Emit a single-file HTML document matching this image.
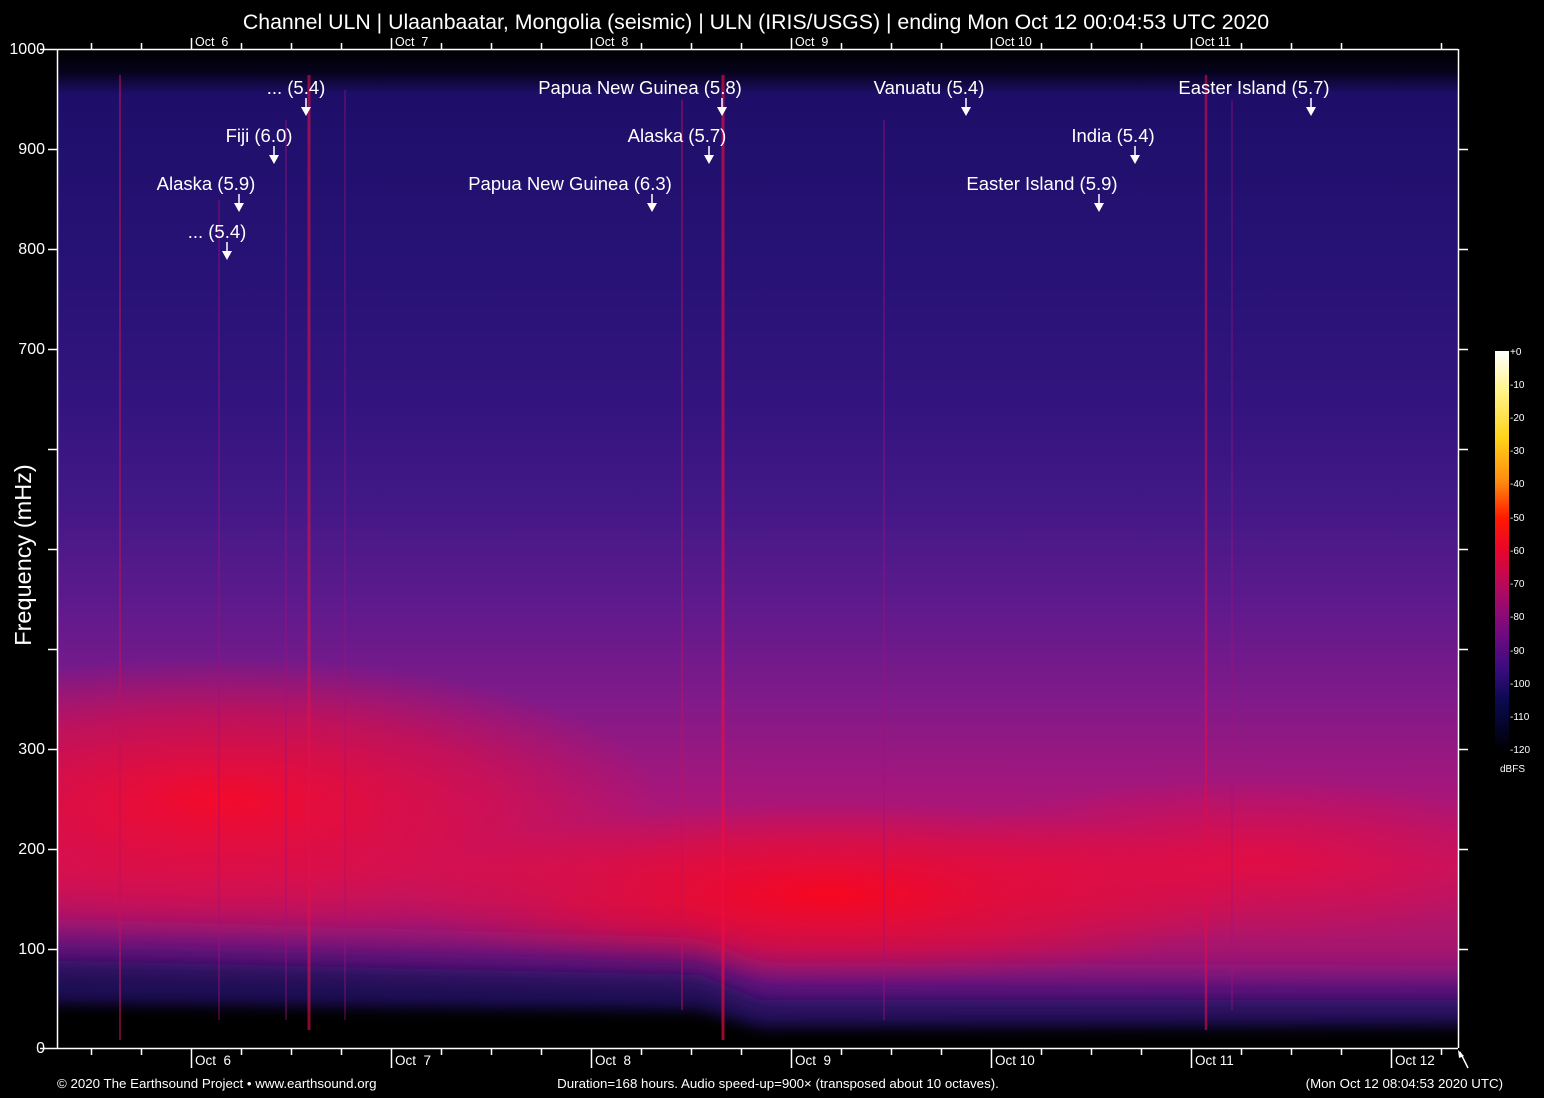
<!DOCTYPE html>
<html><head><meta charset="utf-8"><style>
html,body{margin:0;padding:0;background:#000;}
svg{display:block;}
text{font-family:"Liberation Sans",Arial,sans-serif;fill:#fff;}
</style></head><body>
<svg width="1544" height="1098" viewBox="0 0 1544 1098" xmlns="http://www.w3.org/2000/svg">
<defs>
<linearGradient id="base" x1="0" y1="49" x2="0" y2="1048" gradientUnits="userSpaceOnUse">
<stop offset="0" stop-color="#000"/>
<stop offset="0.022" stop-color="#05021a"/>
<stop offset="0.045" stop-color="#1e0e68"/>
<stop offset="0.2" stop-color="#261274"/>
<stop offset="0.35" stop-color="#32147e"/>
<stop offset="0.45" stop-color="#421886"/>
<stop offset="0.55" stop-color="#5c1a8c"/>
<stop offset="0.65" stop-color="#801a8a"/>
<stop offset="0.75" stop-color="#a8167a"/>
<stop offset="0.82" stop-color="#c01466"/>
<stop offset="0.9" stop-color="#a8166e"/>
<stop offset="1" stop-color="#7a1a8c"/>
</linearGradient>
<radialGradient id="r1" cx="220" cy="800" r="340" gradientUnits="userSpaceOnUse" gradientTransform="translate(220 800) scale(1.3 0.42) translate(-220 -800)">
<stop offset="0" stop-color="#f80a26" stop-opacity="0.95"/>
<stop offset="0.6" stop-color="#e80c3a" stop-opacity="0.55"/>
<stop offset="1" stop-color="#e80c3a" stop-opacity="0"/>
</radialGradient>
<radialGradient id="r2" cx="830" cy="895" r="330" gradientUnits="userSpaceOnUse" gradientTransform="translate(830 895) scale(1.3 0.28) translate(-830 -895)">
<stop offset="0" stop-color="#fa061c" stop-opacity="0.95"/>
<stop offset="0.6" stop-color="#ec0a30" stop-opacity="0.55"/>
<stop offset="1" stop-color="#ec0a30" stop-opacity="0"/>
</radialGradient>
<radialGradient id="r3" cx="1250" cy="860" r="260" gradientUnits="userSpaceOnUse" gradientTransform="translate(1250 860) scale(1.2 0.32) translate(-1250 -860)">
<stop offset="0" stop-color="#ec0a38" stop-opacity="0.75"/>
<stop offset="1" stop-color="#ec0a38" stop-opacity="0"/>
</radialGradient>
<linearGradient id="cbar" x1="0" y1="351" x2="0" y2="748" gradientUnits="userSpaceOnUse">
<stop offset="0" stop-color="#ffffff"/>
<stop offset="0.1" stop-color="#fff58a"/>
<stop offset="0.22" stop-color="#ffd21a"/>
<stop offset="0.33" stop-color="#ff8a10"/>
<stop offset="0.42" stop-color="#ff1a00"/>
<stop offset="0.5" stop-color="#e8062a"/>
<stop offset="0.6" stop-color="#b00a60"/>
<stop offset="0.7" stop-color="#780a80"/>
<stop offset="0.8" stop-color="#3a0c80"/>
<stop offset="0.88" stop-color="#0a0a50"/>
<stop offset="1" stop-color="#000008"/>
</linearGradient>
<filter id="b1" x="-10%" y="-50%" width="120%" height="200%"><feGaussianBlur stdDeviation="18"/></filter>
<filter id="b2" x="-10%" y="-50%" width="120%" height="200%"><feGaussianBlur stdDeviation="14"/></filter>
<filter id="b3" x="-10%" y="-50%" width="120%" height="200%"><feGaussianBlur stdDeviation="7"/></filter>
<clipPath id="plot"><rect x="58" y="49" width="1400" height="999"/></clipPath>
</defs>

<g clip-path="url(#plot)">
<rect x="58" y="49" width="1400" height="999" fill="url(#base)"/>
<rect x="58" y="49" width="1400" height="999" fill="url(#r1)"/>
<rect x="58" y="49" width="1400" height="999" fill="url(#r2)"/>
<rect x="58" y="49" width="1400" height="999" fill="url(#r3)"/>
<!-- purple transition -->
<path d="M20 930 L700 950 L760 975 L1500 978 L1500 1100 L20 1100 Z" fill="#4a1888" opacity="0.7" filter="url(#b1)"/>
<!-- navy band -->
<path d="M20 960 L700 975 L760 1000 L1500 1000 L1500 1100 L20 1100 Z" fill="#160a50" opacity="0.9" filter="url(#b2)"/>
<!-- black -->
<path d="M20 1003 L700 1010 L760 1028 L1500 1026 L1500 1100 L20 1100 Z" fill="#000" filter="url(#b3)"/>
<!-- event lines -->
<g stroke-width="2">
<line x1="120" y1="75" x2="120" y2="1040" stroke="#c0105a" stroke-opacity="0.55"/>
<line x1="219" y1="200" x2="219" y2="1020" stroke="#a0107a" stroke-opacity="0.4"/>
<line x1="286" y1="120" x2="286" y2="1020" stroke="#a0107a" stroke-opacity="0.4"/>
<line x1="309" y1="75" x2="309" y2="1030" stroke="#e0104a" stroke-width="3" stroke-opacity="0.6"/>
<line x1="345" y1="90" x2="345" y2="1020" stroke="#a0107a" stroke-opacity="0.35"/>
<line x1="682" y1="100" x2="682" y2="1010" stroke="#c0105a" stroke-opacity="0.45"/>
<line x1="723" y1="75" x2="723" y2="1040" stroke="#f00a40" stroke-width="3" stroke-opacity="0.65"/>
<line x1="884" y1="120" x2="884" y2="1020" stroke="#a0107a" stroke-opacity="0.4"/>
<line x1="1206" y1="75" x2="1206" y2="1030" stroke="#e00c4a" stroke-width="2.5" stroke-opacity="0.6"/>
<line x1="1232" y1="100" x2="1232" y2="1010" stroke="#a0107a" stroke-opacity="0.35"/>
</g>
</g>

<g stroke="#fff" stroke-width="1.5" fill="none">
<line x1="57.5" y1="49" x2="57.5" y2="1048"/>
<line x1="1458.5" y1="49" x2="1458.5" y2="1048"/>
<line x1="40" y1="1048.5" x2="1458" y2="1048.5"/>
<line x1="40" y1="49.5" x2="1458" y2="49.5"/>
<path d="M48 149.5H57M48 249.5H57M48 349.5H57M48 449.5H57M48 549.5H57M48 649.5H57M48 749.5H57M48 849.5H57M48 949.5H57"/>
<path d="M1458 149.5H1468M1458 249.5H1468M1458 349.5H1468M1458 449.5H1468M1458 549.5H1468M1458 649.5H1468M1458 749.5H1468M1458 849.5H1468M1458 949.5H1468"/>
<path d="M91.5 1048V1055M141.5 1048V1055M241.5 1048V1055M291.5 1048V1055M341.5 1048V1055M441.5 1048V1055M491.5 1048V1055M541.5 1048V1055M641.5 1048V1055M691.5 1048V1055M741.5 1048V1055M841.5 1048V1055M891.5 1048V1055M941.5 1048V1055M1041.5 1048V1055M1091.5 1048V1055M1141.5 1048V1055M1241.5 1048V1055M1291.5 1048V1055M1341.5 1048V1055M1441.5 1048V1055"/>
<path d="M191.5 1048V1068M391.5 1048V1068M591.5 1048V1068M791.5 1048V1068M991.5 1048V1068M1191.5 1048V1068M1391.5 1048V1068"/>
<path d="M91.5 49V43M141.5 49V43M241.5 49V43M291.5 49V43M341.5 49V43M441.5 49V43M491.5 49V43M541.5 49V43M641.5 49V43M691.5 49V43M741.5 49V43M841.5 49V43M891.5 49V43M941.5 49V43M1041.5 49V43M1091.5 49V43M1141.5 49V43M1241.5 49V43M1291.5 49V43M1341.5 49V43M1441.5 49V43"/>
<path d="M191.5 49V38M391.5 49V38M591.5 49V38M791.5 49V38M991.5 49V38M1191.5 49V38"/>
<path d="M1460 1052 L1468 1068"/>
</g>
<polygon points="1458,1050 1464,1056 1459,1058" fill="#fff"/>

<text x="756" y="29" font-size="21.3" text-anchor="middle">Channel ULN | Ulaanbaatar, Mongolia (seismic) | ULN (IRIS/USGS) | ending Mon Oct 12 00:04:53 UTC 2020</text>

<g font-size="12.5">
<text x="195" y="46" xml:space="preserve">Oct  6</text><text x="395" y="46" xml:space="preserve">Oct  7</text><text x="595" y="46" xml:space="preserve">Oct  8</text>
<text x="795" y="46" xml:space="preserve">Oct  9</text><text x="995" y="46">Oct 10</text><text x="1195" y="46">Oct 11</text>
</g>
<g font-size="13.5">
<text x="195" y="1065" xml:space="preserve">Oct  6</text><text x="395" y="1065" xml:space="preserve">Oct  7</text><text x="595" y="1065" xml:space="preserve">Oct  8</text>
<text x="795" y="1065" xml:space="preserve">Oct  9</text><text x="995" y="1065">Oct 10</text><text x="1195" y="1065">Oct 11</text><text x="1395" y="1065">Oct 12</text>
</g>

<g font-size="16" text-anchor="end">
<text x="45" y="54">1000</text><text x="45" y="154">900</text><text x="45" y="254">800</text><text x="45" y="354">700</text>
<text x="45" y="754">300</text><text x="45" y="854">200</text><text x="45" y="954">100</text><text x="45" y="1053">0</text>
</g>
<text font-size="23.5" transform="translate(31 555) rotate(-90)" text-anchor="middle">Frequency (mHz)</text>

<g font-size="18.5" text-anchor="middle">
<text x="296" y="94">... (5.4)</text>
<text x="259" y="142">Fiji (6.0)</text>
<text x="206" y="190">Alaska (5.9)</text>
<text x="217" y="238">... (5.4)</text>
<text x="640" y="94">Papua New Guinea (5.8)</text>
<text x="677" y="142">Alaska (5.7)</text>
<text x="570" y="190">Papua New Guinea (6.3)</text>
<text x="929" y="94">Vanuatu (5.4)</text>
<text x="1113" y="142">India (5.4)</text>
<text x="1042" y="190">Easter Island (5.9)</text>
<text x="1254" y="94">Easter Island (5.7)</text>
</g>
<g stroke="#fff" stroke-width="1.5">
<line x1="306" y1="98" x2="306" y2="108"/><line x1="274" y1="146" x2="274" y2="156"/>
<line x1="239" y1="194" x2="239" y2="204"/><line x1="227" y1="242" x2="227" y2="252"/>
<line x1="722" y1="98" x2="722" y2="108"/><line x1="709" y1="146" x2="709" y2="156"/>
<line x1="652" y1="194" x2="652" y2="204"/><line x1="966" y1="98" x2="966" y2="108"/>
<line x1="1135" y1="146" x2="1135" y2="156"/><line x1="1099" y1="194" x2="1099" y2="204"/>
<line x1="1311" y1="98" x2="1311" y2="108"/>
</g>
<g fill="#fff">
<polygon points="301,107 311,107 306,116"/><polygon points="269,155 279,155 274,164"/>
<polygon points="234,203 244,203 239,212"/><polygon points="222,251 232,251 227,260"/>
<polygon points="717,107 727,107 722,116"/><polygon points="704,155 714,155 709,164"/>
<polygon points="647,203 657,203 652,212"/><polygon points="961,107 971,107 966,116"/>
<polygon points="1130,155 1140,155 1135,164"/><polygon points="1094,203 1104,203 1099,212"/>
<polygon points="1306,107 1316,107 1311,116"/>
</g>

<rect x="1495" y="351" width="14" height="397" fill="url(#cbar)"/>
<g font-size="10" fill="#ddd">
<text x="1510" y="355">+0</text><text x="1510" y="388">-10</text><text x="1510" y="421">-20</text>
<text x="1510" y="454">-30</text><text x="1510" y="487">-40</text><text x="1510" y="521">-50</text>
<text x="1510" y="554">-60</text><text x="1510" y="587">-70</text><text x="1510" y="620">-80</text>
<text x="1510" y="654">-90</text><text x="1510" y="687">-100</text><text x="1510" y="720">-110</text>
<text x="1510" y="753">-120</text><text x="1500" y="772">dBFS</text>
</g>

<g font-size="13.3">
<text x="57" y="1088">© 2020 The Earthsound Project • www.earthsound.org</text>
<text x="778" y="1088" text-anchor="middle">Duration=168 hours. Audio speed-up=900× (transposed about 10 octaves).</text>
<text x="1503" y="1088" text-anchor="end">(Mon Oct 12 08:04:53 2020 UTC)</text>
</g>
</svg>
</body></html>
